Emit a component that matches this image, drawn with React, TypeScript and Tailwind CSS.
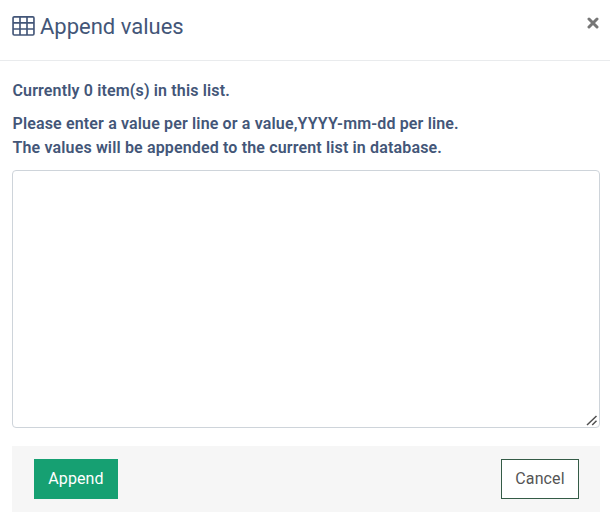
function TableIcon() {
  return (
    <svg className="mt-px h-5 w-[23px] shrink-0" viewBox="0 0 23 20" fill="none" stroke="currentColor" strokeWidth="1.65">
      <rect x="1.05" y="0.85" width="20.9" height="18.1" rx="1.2" />
      <path d="M8 1V19M15 1V19M1 6.9H22M1 13H22" />
    </svg>
  );
}

export default function App() {
  return (
    <div className="flex h-[519px] w-[610px] flex-col bg-white font-[Roboto,sans-serif] text-base text-[#435678]">
      <header className="flex h-[61px] shrink-0 items-start justify-between border-b border-[#e9ebed] pr-[11px] pl-3">
        <h1 className="flex pt-[15px] text-[22px] leading-[23px]">
          <TableIcon />
          <span className="ml-[5px]">Append values</span>
        </h1>
        <button aria-label="Close" className="mt-[17px] text-[#777777]">
          <svg className="size-3" viewBox="0 0 12 12" stroke="currentColor" strokeWidth="3" strokeLinecap="round">
            <path d="M2 2L10 10M10 2L2 10" />
          </svg>
        </button>
      </header>
      <main className="flex flex-col pr-[10px] pl-3">
        <p className="mt-[18px] pl-[0.5px] leading-6 font-semibold tracking-[0.15px]">Currently 0 item(s) in this list.</p>
        <p className="mt-[9px] pl-[0.5px] leading-6 font-semibold tracking-[0.15px]">
          Please enter a value per line or a value,YYYY-mm-dd per line.
          <br />
          The values will be appended to the current list in database.
        </p>
        <div className="relative mt-[10px] flex">
          <textarea className="h-[258px] w-full resize-none rounded border border-[#ced4da] bg-white" />
          <svg
            className="pointer-events-none absolute right-[2px] bottom-[2px] h-[11px] w-[12px] text-[#505050]"
            viewBox="0 0 12 11"
            fill="none"
            stroke="currentColor"
            strokeWidth="1.5"
          >
            <path d="M1 10L10.5 1M6.2 10L10.5 5.8" />
          </svg>
        </div>
        <footer className="mt-[18px] flex h-[66px] items-start justify-between bg-[#f6f6f6] pt-[13px] pr-[21px] pl-[22px]">
          <button className="h-10 w-[84px] bg-[#16a072] tracking-[0.1px] text-white">Append</button>
          <button className="h-10 w-[78px] border border-[#345b46] bg-white tracking-[0.1px] text-[#555555]">Cancel</button>
        </footer>
      </main>
    </div>
  );
}
